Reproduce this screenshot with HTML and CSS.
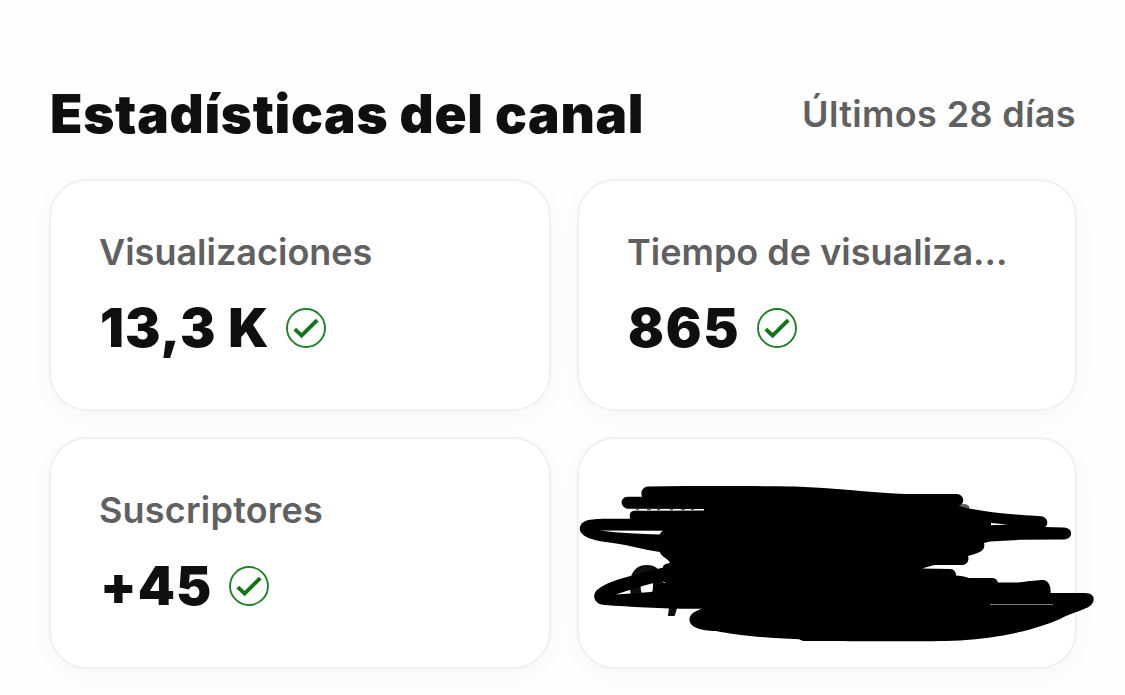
FILE: index.html
```html
<!DOCTYPE html>
<html lang="es">
<head>
  <meta charset="UTF-8">
  <meta name="viewport" content="width=device-width, initial-scale=1.0">
  <title>Estadísticas del canal</title>
  <link rel="stylesheet" href="styles.css">
</head>
<body>
  <svg class="defs" width="0" height="0">
    <symbol id="check" viewBox="0 0 40 40">
      <circle cx="20" cy="20" r="19" fill="none" stroke="#1e8027" stroke-width="1.9"/>
      <path d="M8.8 21.2 L15.6 27.6 L31.2 12.2" fill="none" stroke="#107516" stroke-width="3.9"/>
    </symbol>
  </svg>

  <div class="header">
    <h1>Estadísticas del canal</h1>
    <span class="period">Últimos 28 días</span>
  </div>

  <div class="cards">
    <div class="card">
      <div class="label">Visualizaciones</div>
      <div class="value"><span>13,3 K</span><svg class="check"><use href="#check"/></svg></div>
    </div>
    <div class="card">
      <div class="label">Tiempo de visualiza...</div>
      <div class="value hours"><span>865</span><svg class="check"><use href="#check"/></svg></div>
    </div>
    <div class="card">
      <div class="label subs">Suscriptores</div>
      <div class="value"><span>+45</span><svg class="check"><use href="#check"/></svg></div>
    </div>
    <div class="card">
      <div class="label">&nbsp;</div>
      <div class="value"><span>0,</span></div>
      <!-- Marker strokes over the last card -->
      <svg class="scribble" viewBox="577 480 520 170">
        <ellipse cx="964" cy="508" rx="5.5" ry="4" fill="#606060"/>
        <path fill-rule="evenodd" d="M648 486.4 C700 486 760 486 795 486.5 C835 488 865 492 905 494 L957 494 C965 495 965 504 959 506
          L969 508.5 L984 511 C1005 514 1025 515.5 1041 516.3 C1048 517 1049 525 1045 527 L1064 527.4 C1074 528 1073 539 1064 539.5
          L1020 539.8 L990 541.5 L984 543 C986 551 979 553 968 556 C970 562 965 565 962 565 L934 565 L922 568.5 L950 569
          C954 569 956 572 956 575.5 C963 576 966 577 969 578 L991 578 C996 578 997 580 998 582.5 L1018 582.5 C1030 581 1038 580 1044 580
          C1050 582 1051 588 1050.5 593 L1085 593 C1095 593 1096 601 1090 606 C1082 611 1076 611 1060 619 C1035 630 1000 638 960 640.5
          C920 642 860 641 803 641 L799 639.3 C765 638 735 635 716 631 C700 631 689 627 689.5 619 C690 613 696 611 702 608.7
          C667 609 630 607 605 605 C595 605 591 596 597 590 C606 582 622 578 642 573 L663 567.5 C663 564 667 563.5 670 563
          C668 558 660 556 660 552 C643 550 630 545 613 543 C592 541 580 536 579.8 529 C580 520 590 519 605 518.8 L630 518.8
          C629 513 631 510.7 635 510.7 L704 510.4 L704 509 L628 508.8 C620 508 619 497 628 496.7 L642 496.7 C640 491 643 487 648 486.4 Z
          M600 530.6 L663 530.8 C661 532 660 533 660 534.6 C640 534 620 533.5 600 530.6 Z
          M616 594.6 C632 589 648 584 663 581 L668 585 L651 592 Z
          M991 523 L1008 524.6 L991 525.2 Z
          M990 604.2 L1053 604.2 L1053 604.8 L990 604.8 Z"/>
        <!-- filled part behind the second row of strokes -->
        <path d="M653 585 L680 580 L680 606 L653 606 Z"/>
        <path d="M636 509.7 H701" fill="none" stroke="#606060" stroke-width="1.2" stroke-dasharray="3 8 4 6 3 10"/>
      </svg>
    </div>
  </div>
</body>
</html>
```

FILE: styles.css
```css
* {
  box-sizing: border-box;
}

body {
  margin: 0;
  padding: 79px 48px 0 49px;
  height: 695px;
  overflow: hidden;
  background: #fefefe;
  color: #0f0f0f;
  font-family: Inter, "Liberation Sans", sans-serif;
}

.defs {
  display: block;
}

/* Header */
.header {
  display: flex;
  justify-content: space-between;
  height: 100px;
  padding: 0 1px;
  white-space: nowrap;
}

h1 {
  margin: 0;
  font-size: 53px;
  line-height: 70px;
  font-weight: 900;
  letter-spacing: 0.7px;
}

.period {
  font-size: 36px;
  line-height: 71px;
  font-weight: 600;
  letter-spacing: 0.35px;
  color: #606060;
}

/* Cards */
.cards {
  display: grid;
  grid-template-columns: 502px 500px;
  grid-auto-rows: 232px;
  gap: 26px;
}

.card {
  position: relative;
  padding: 46px 48px 0 48px;
  background: #fff;
  border: 2px solid #f0f0f0;
  border-radius: 38px;
  box-shadow: 0 6px 24px rgba(0, 0, 0, 0.035);
}

.label {
  font-size: 36px;
  line-height: 50px;
  font-weight: 600;
  color: #606060;
  white-space: nowrap;
}

.label.subs {
  letter-spacing: 0.2px;
}

.value {
  display: flex;
  align-items: center;
  gap: 17px;
  height: 64px;
  margin-top: 19px;
  padding-left: 1px;
  font-size: 53px;
  line-height: 64px;
  font-weight: 900;
  letter-spacing: 1px;
  white-space: nowrap;
}

.value.hours {
  letter-spacing: 1.7px;
}

.check {
  width: 40px;
  height: 40px;
}

.scribble {
  position: absolute;
  left: -2px;
  top: 41px;
  width: 520px;
  height: 170px;
}
```
